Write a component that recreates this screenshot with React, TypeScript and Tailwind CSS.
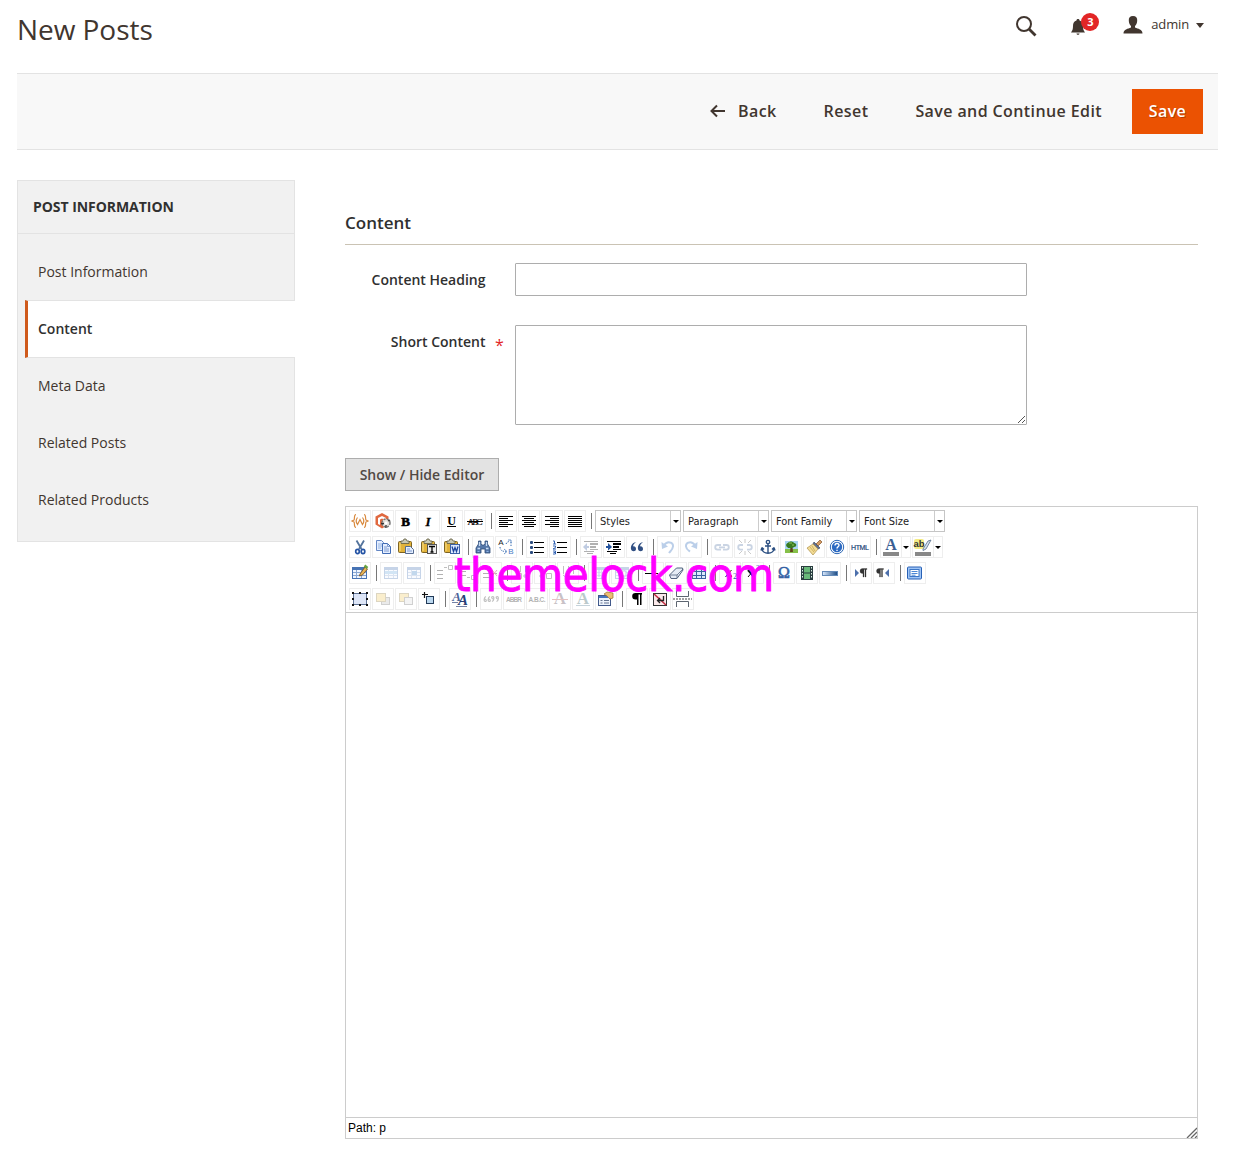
import React from "react";

const Svg = ({ children, faded = false }: { children: React.ReactNode; faded?: boolean }) => (
  <svg viewBox="0 0 20 20" fill="none" className={faded ? "block size-5 opacity-30" : "block size-5"}>
    {children}
  </svg>
);

const glyph = (x: number, y: number, size: number, text: string, extra: React.SVGProps<SVGTextElement> = {}) => (
  <text x={x} y={y} fontSize={size} textAnchor="middle" fill="#000" fontFamily="Liberation Serif, serif" {...extra}>
    {text}
  </text>
);

const lines = (rows: [number, number, number][], color = "#000") => (
  <g fill={color} shapeRendering="crispEdges">
    {rows.map(([x, y, w], i) => (
      <rect key={i} x={x} y={y} width={w} height={1} />
    ))}
  </g>
);

const Clipboard = ({ children }: { children: React.ReactNode }) => (
  <Svg>
    <rect x="2.5" y="4.5" width="13" height="11" rx="1" fill="#e2b33a" stroke="#7d6323" />
    <path d="M4 14V6h2" stroke="#fbe08a" />
    <path d="M5 6.500V4h2l1-2h2l1 2h2v2.500z" fill="#c9c9b4" stroke="#5f5a3e" strokeWidth=".8" />
    {children}
  </Svg>
);

const Grid = ({ x = 3, y = 4, w = 14, h = 12, stroke = "#4773b4" }) => (
  <g shapeRendering="crispEdges">
    <rect x={x + 0.5} y={y + 0.5} width={w - 1} height={h - 1} fill="#eef5ff" stroke={stroke} />
    <rect x={x} y={y} width={w} height="3" fill={stroke} />
    <path d={`M${x} ${y + 5.5}h${w}M${x} ${y + 8.5}h${w}M${x + 4.5} ${y}v${h}M${x + 9.5} ${y}v${h}`} stroke={stroke} opacity=".6" />
  </g>
);

const Plus = ({ x, y }: { x: number; y: number }) => (
  <path d={`M${x - 2} ${y}h4M${x} ${y - 2}v4`} stroke="#333" />
);

const icons: Record<string, React.ReactNode> = {
  variable: (
    <Svg>
      <path d="M6 3.500C3.500 3.500 5 8 4 9L2 10l2 1c1 1-.5 5.500 2 5.500M14 3.500c2.500 0 1 4.500 2 5.500l2 1-2 1c-1 1 .5 5.500-2 5.500" stroke="#d98a3f" strokeWidth="1.200" />
      <path d="M7.500 6.500c-1.500 2-1.500 5 0 7l2.500-5 2.500 5c1.500-2 1.500-5 0-7" stroke="#d98a3f" strokeWidth="1.200" />
    </Svg>
  ),
  widget: (
    <Svg>
      <path d="M9 2l6.500 3.500v8L9 17.500l-6.500-4v-8z" fill="#e0683f" />
      <path d="M5 7l4-2 4 2v6l-2 1V8.500L9 7.500l-2 1V14l-2-1z" fill="#fff" />
      <circle cx="13" cy="12" r="4" fill="#e5e0da" stroke="#777" strokeWidth="1.500" strokeDasharray="2 1.200" />
      <circle cx="13" cy="12" r="1.500" fill="#fff" />
      <path d="M8 12.500h3M13 14v3M15 10l2-1" stroke="#333" strokeWidth="1.300" />
    </Svg>
  ),
  bold: <Svg>{glyph(9.5, 14.5, 13, "B", { fontWeight: 700, stroke: "#000", strokeWidth: 0.6 })}</Svg>,
  italic: <Svg>{glyph(9, 14.5, 13, "I", { fontWeight: 700, fontStyle: "italic", stroke: "#000", strokeWidth: 0.3 })}</Svg>,
  underline: (
    <Svg>
      {glyph(9.5, 13.5, 12, "U", { fontWeight: 700 })}
      {lines([[5, 15, 9]])}
    </Svg>
  ),
  strike: (
    <Svg>
      {glyph(10, 13.5, 9, "ABC", { textLength: 15, stroke: "#000", strokeWidth: 0.2 })}
      {lines([[2, 10, 16]])}
    </Svg>
  ),
  alignLeft: <Svg>{lines([[3, 5, 14], [3, 7, 9], [3, 9, 14], [3, 11, 9], [3, 13, 14], [3, 15, 9]])}</Svg>,
  alignCenter: <Svg>{lines([[3, 5, 14], [5, 7, 10], [3, 9, 14], [5, 11, 10], [3, 13, 14], [5, 15, 10]])}</Svg>,
  alignRight: <Svg>{lines([[3, 5, 14], [8, 7, 9], [3, 9, 14], [8, 11, 9], [3, 13, 14], [8, 15, 9]])}</Svg>,
  alignFull: <Svg>{lines([[3, 5, 14], [3, 7, 14], [3, 9, 14], [3, 11, 14], [3, 13, 14], [3, 15, 14]])}</Svg>,
  cut: (
    <Svg>
      <path d="M6.500 3.500l5 8.500M14 3.500l-5 8.500" stroke="#53739c" strokeWidth="1.800" />
      <ellipse cx="7.500" cy="14.500" rx="1.800" ry="2.200" stroke="#2554a5" strokeWidth="1.700" />
      <ellipse cx="13" cy="14.500" rx="1.800" ry="2.200" stroke="#2554a5" strokeWidth="1.700" />
    </Svg>
  ),
  copy: (
    <Svg>
      <path d="M3.500 3.500h5l2 2v8h-7z" fill="#e5efff" stroke="#6487c4" />
      <path d="M5 7h4M5 9h4M5 11h3" stroke="#86a7da" strokeWidth=".8" />
      <path d="M9.500 6.500h5l3 3v7h-8z" fill="#e5efff" stroke="#416cb5" />
      <path d="M14.500 6.500v3h3M11 10h3M11 12h5M11 14h5" stroke="#6487c4" strokeWidth=".8" />
    </Svg>
  ),
  paste: (
    <Clipboard>
      <path d="M9.500 9.500h5l3 3v4h-8z" fill="#e5efff" stroke="#556b90" />
      <path d="M11 12h3M11 14h5" stroke="#6487c4" strokeWidth=".8" />
    </Clipboard>
  ),
  pasteText: (
    <Clipboard>
      <rect x="8.500" y="7.500" width="9" height="9" fill="#eee" stroke="#555" />
      <path d="M10 9.500h6M13 9.500V15M11.500 15h3" stroke="#000" strokeWidth="1.300" />
    </Clipboard>
  ),
  pasteWord: (
    <Clipboard>
      <rect x="8.500" y="7.500" width="9" height="9" fill="#dce9ff" stroke="#3d62a8" />
      <path d="M10 9.500l1.500 5 1.500-4 1.500 4 1.500-5" stroke="#1d459c" strokeWidth="1.300" />
    </Clipboard>
  ),
  search: (
    <Svg>
      <path d="M5.500 4h2.500v3l1 1h2l1-1V4h2.500v3l2.500 4v5h-5v-4H8v4H3v-5l2.500-4z" fill="#5577a8" stroke="#2f4c79" strokeWidth=".8" />
      <path d="M4.500 11.500h2.500M13 11.500h2.500M6.500 5v4M13.500 5v4" stroke="#c8dcf5" strokeWidth="1.300" />
      <path d="M4.500 14.500h2M13.500 14.500h2" stroke="#8fb3e4" />
    </Svg>
  ),
  replace: (
    <Svg>
      {glyph(5, 8, 8, "A", { fontFamily: "Liberation Sans, sans-serif", fill: "#222" })}
      {glyph(15, 17, 8, "B", { fontFamily: "Liberation Sans, sans-serif", fill: "#4a7dc4" })}
      <path d="M10 7c1-2 2-2.500 4-2.500M15 9V5M4 10c0 3 2 4.500 6 4.500" stroke="#3268ae" strokeDasharray="1.300 1.300" />
      <path d="M12 3h3v3M8 12l3 2.500L8 17" stroke="#4b7dbf" strokeWidth=".8" />
    </Svg>
  ),
  bullets: (
    <Svg>
      {lines([[7, 5, 10], [7, 10, 10], [7, 15, 10]])}
      <g fill="#2b4b7e"><rect x="3" y="4" width="3" height="3" rx="1" /><rect x="3" y="9" width="3" height="3" rx="1" /><rect x="3" y="14" width="3" height="3" rx="1" /></g>
    </Svg>
  ),
  numbers: (
    <Svg>
      {lines([[7, 5, 10], [7, 10, 10], [7, 15, 10]])}
      <path d="M3 4h1.500v3M3 7h3M3 9h2.500v1.500L3 12h3M3 14h2.500v3H3M3.500 15.500h2" stroke="#3263b4" strokeWidth="1" />
    </Svg>
  ),
  outdent: (
    <Svg faded>
      {lines([[3, 4, 14], [9, 6, 8], [9, 7, 8], [9, 9, 6], [9, 10, 6], [9, 12, 8], [3, 14, 10], [6, 16, 6]])}
      <path d="M6 6L2 10l4 4v-3h2V9H6z" fill="#315aa0" />
    </Svg>
  ),
  indent: (
    <Svg>
      {lines([[3, 4, 14], [9, 6, 8], [9, 7, 8], [9, 9, 6], [9, 10, 6], [9, 12, 8], [3, 14, 10], [6, 16, 6]])}
      <path d="M2 9h2V6l4 4-4 3.500V11H2z" fill="#23539e" />
    </Svg>
  ),
  quote: (
    <Svg>
      <path d="M9 5C5 6 3.500 9 4 12c.5 3 5 3 5 0 0-2-1.500-3-3-2.500C6 8 7 6.500 9 5zM16 5c-4 1-5.500 4-5 7 .5 3 5 3 5 0 0-2-1.500-3-3-2.500C13 8 14 6.500 16 5z" fill="#304f83" />
    </Svg>
  ),
  undo: (
    <Svg faded>
      <path d="M3.500 5l.5 7 6-2.500z" fill="#2362b7" />
      <path d="M6 8.500c3-5 9.500-3.500 9 1-.3 3-2.500 4.500-4 6.500" stroke="#2362b7" strokeWidth="2" />
    </Svg>
  ),
  redo: (
    <Svg faded>
      <path d="M16.500 5l-.5 7-6-2.500z" fill="#2362b7" />
      <path d="M14 8.500c-3-5-9.500-3.500-9 1 .3 3 2.500 4 4 5" stroke="#2362b7" strokeWidth="2" />
    </Svg>
  ),
  link: (
    <Svg faded>
      <path d="M9 8H5.500a2.300 2.300 0 000 4.600H9M11 8h3.500a2.300 2.300 0 010 4.600H11M7 10.300h6" stroke="#5275a5" strokeWidth="1.800" />
    </Svg>
  ),
  unlink: (
    <Svg faded>
      <path d="M8 8H5.500a2.300 2.300 0 000 4.600H8M12 8h2.500a2.300 2.300 0 010 4.600H12" stroke="#5275a5" strokeWidth="1.800" />
      <path d="M10 6V2M7 6L4 3M13 6l3-3M10 14v4M7 14l-3 3M13 14l3 3" stroke="#555" />
    </Svg>
  ),
  anchor: (
    <Svg>
      <circle cx="10" cy="5" r="1.700" stroke="#2b4f82" strokeWidth="1.300" />
      <path d="M10 7v9M7 9h6M4 11c0 7 12 7 12 0M4 10.500l-1 3M4 10.500l2 2M16 10.500l1 3M16 10.500l-2 2" stroke="#2b4f82" strokeWidth="1.400" />
    </Svg>
  ),
  image: (
    <Svg>
      <rect x="4" y="4" width="13" height="12" fill="#a8d4ef" />
      <path d="M4 12h13v4H4z" fill="#86c04a" />
      <path d="M9.500 10h2l.5 5H9z" fill="#60411c" />
      <path d="M6 10c-2-2 0-4 1-4 1-2 5-2 6 0 3 0 3 4 0 4-1 1-5 2-7 0z" fill="#387b20" />
      <path d="M8 6h3M11 8h2" stroke="#91c65a" />
    </Svg>
  ),
  cleanup: (
    <Svg>
      <path d="M12 7l4-4 2 2-4 4z" fill="#d59b61" stroke="#815129" strokeWidth=".7" />
      <path d="M10 5l6 6-2 1-5-5z" fill="#63718c" stroke="#414c60" strokeWidth=".7" />
      <path d="M9 7l5 5-5 6-6-7z" fill="#f3dc96" stroke="#ae914a" strokeWidth=".7" />
      <path d="M8 9l3 5M6 10l4 5" stroke="#c6a855" strokeWidth=".8" />
    </Svg>
  ),
  help: (
    <Svg>
      <circle cx="10" cy="10" r="6.700" fill="#fff" stroke="#2b66b5" />
      <circle cx="10" cy="10" r="5.200" fill="#2c6ac2" />
      <path d="M8 8.500c0-3 4.300-2.500 4 0-.2 1.200-2 1.500-2 3M10 12.800v1.300" stroke="#fff" strokeWidth="1.400" />
    </Svg>
  ),
  html: <Svg>{glyph(10, 12.5, 7, "HTML", { fontFamily: "Liberation Sans, sans-serif", fill: "#254879", textLength: 18, stroke: "#254879", strokeWidth: 0.2 })}</Svg>,
  forecolor: (
    <Svg>
      {glyph(10, 13, 16, "A", { fontWeight: 700, fill: "#3a5e93" })}
      <rect x="2" y="15" width="16" height="4" fill="#888" />
    </Svg>
  ),
  backcolor: (
    <Svg>
      <rect x="1" y="2" width="10" height="10" rx="2" fill="#f4eb83" />
      {glyph(6, 10, 9.5, "ab", { fontFamily: "Liberation Sans, sans-serif", fontWeight: 700, fill: "#333" })}
      <path d="M10 12l5-8 3-1-5 9-3 1.500z" fill="#d4dfed" stroke="#57708d" strokeWidth=".8" />
      <rect x="2" y="15" width="16" height="4" fill="#888" />
    </Svg>
  ),
  table: (
    <Svg>
      <Grid x={2} y={4} w={15} h={12} />
      <path d="M10 11l5-7 2.500 2-5 6-3 1z" fill="#e8b455" stroke="#75552d" strokeWidth=".9" />
      <path d="M14.500 2.500l3 2.500" stroke="#68a342" strokeWidth="2.400" />
    </Svg>
  ),
  rowProps: <Svg faded><Grid /><rect x="4" y="8" width="12" height="3" fill="#6eabdf" /></Svg>,
  cellProps: <Svg faded><Grid /><rect x="8" y="8" width="5" height="4" fill="#397fc7" /></Svg>,
  rowBefore: <Svg faded>{lines([[2, 7, 6], [2, 11, 6], [2, 15, 6]])}<path d="M9 4.500h3M13.500 2.500h4v4h-4z" stroke="#333" /></Svg>,
  rowAfter: <Svg faded>{lines([[2, 4, 6], [2, 8, 6], [2, 12, 6]])}<path d="M9 14.500h3M13.500 12.500h4v4h-4z" stroke="#333" /></Svg>,
  deleteRow: <Svg faded>{lines([[2, 5, 7], [2, 10, 14], [2, 14, 7]])}<path d="M11 7l5 6M16 7l-5 6" stroke="#a22" /></Svg>,
  colBefore: <Svg faded><path d="M8.500 3v6M13.500 3v6M4.500 10.500h5v5h-5z" stroke="#333" /><Plus x={13} y={13} /></Svg>,
  colAfter: <Svg faded><path d="M6.500 3v6M11.500 3v6M11.500 10.500h5v5h-5z" stroke="#333" /><Plus x={6} y={13} /></Svg>,
  deleteCol: <Svg faded><path d="M5.500 3v8M10.500 3v13M15.500 3v8M5 12l5 4" stroke="#333" /></Svg>,
  splitCells: <Svg faded><Grid /><path d="M10 5v9" stroke="#216ab4" /></Svg>,
  mergeCells: <Svg faded><Grid /><rect x="7" y="8" width="7" height="5" fill="#fff" stroke="#216ab4" /></Svg>,
  hr: <Svg>{lines([[2, 10, 13]])}</Svg>,
  eraser: (
    <Svg>
      <path d="M3.500 12l7-7h6l.5 2-6 8.500H5z" fill="#e5ecf5" stroke="#53647f" />
      <path d="M4 12h7l6-6M11 12v3" stroke="#53647f" strokeWidth=".8" />
    </Svg>
  ),
  visual: (
    <Svg>
      <rect x="3" y="5" width="14" height="11" fill="#dbe9fb" />
      <path d="M3 5.500h14M3 8.500h14M3 12.500h14M3 15.500h14M3.500 5v11M7.500 5v11M12.500 5v11M16.500 5v11" stroke="#3a639f" shapeRendering="crispEdges" />
    </Svg>
  ),
  sub: <Svg><path d="M5.500 7l6 7" stroke="#111" strokeWidth="2" /><path d="M11.500 7l-6 7" stroke="#111" />{glyph(15, 16, 8, "2", { fill: "#285ca8" })}</Svg>,
  sup: <Svg><path d="M5 7l6 7" stroke="#111" strokeWidth="2" /><path d="M11 7l-6 7" stroke="#111" />{glyph(15, 8, 8, "2", { fill: "#285ca8" })}</Svg>,
  charmap: <Svg>{glyph(10, 15, 16, "Ω", { fill: "#3561a4", stroke: "#3561a4", strokeWidth: 0.6 })}</Svg>,
  media: (
    <Svg>
      <rect x="4" y="3" width="12" height="14" fill="#293d3f" />
      <rect x="7" y="4" width="6" height="5.500" fill="#68b879" />
      <rect x="7" y="10.500" width="6" height="5.500" fill="#68b879" />
      <path d="M5.500 4v12M14.500 4v12" stroke="#d8eee0" strokeDasharray="1.500 1.500" />
    </Svg>
  ),
  advhr: (
    <Svg>
      <defs><linearGradient id="hr-fill"><stop stopColor="#dbeafe" /><stop offset="1" stopColor="#194982" /></linearGradient></defs>
      <rect x="2.500" y="8.500" width="15" height="4" fill="url(#hr-fill)" stroke="#6289b8" />
    </Svg>
  ),
  ltr: <Svg><path d="M4 6l4 4-4 4z" fill="#4d70ac" /><path d="M16 5.500h-4.500a2.500 2.500 0 000 5H12V14h1V6.500h1V14h1V6.500h1z" fill="#333" stroke="#333" strokeWidth=".3" /></Svg>,
  rtl: <Svg><path d="M15 6l-4 4 4 4z" fill="#4d70ac" /><path d="M9.500 5.500H5a2.500 2.500 0 000 5h.5V14h1V6.500h1V14h1V6.500h1z" fill="#333" stroke="#333" strokeWidth=".3" /></Svg>,
  fullscreen: (
    <Svg>
      <rect x="2.500" y="4" width="14" height="12" rx="1" fill="#9ec4f6" stroke="#2861b5" />
      <rect x="5" y="6.500" width="9" height="7" fill="#fff" stroke="#3c76c6" />
      <path d="M6.500 8.500h6M6.500 10.500h6M6.500 12.200h4" stroke="#397bd1" strokeWidth=".9" />
    </Svg>
  ),
  layer: (
    <Svg>
      <rect x="3.500" y="4.500" width="13" height="11" fill="#dde5f6" stroke="#5b6f92" />
      <g fill="#111" shapeRendering="crispEdges">
        {[[2, 3], [9, 3], [16, 3], [2, 9], [16, 9], [2, 15], [9, 15], [16, 15]].map(([x, y]) => (
          <rect key={`${x}-${y}`} x={x} y={y} width="2" height="2" />
        ))}
      </g>
    </Svg>
  ),
  forward: <Svg faded><rect x="8.500" y="8.500" width="8" height="7" fill="#bbb" stroke="#666" /><rect x="3.500" y="4.500" width="9" height="8" fill="#efc85c" stroke="#8f7836" /></Svg>,
  backward: <Svg faded><rect x="3.500" y="4.500" width="9" height="8" fill="#efc85c" stroke="#8f7836" /><rect x="8.500" y="8.500" width="8" height="7" fill="#ddd" stroke="#666" /></Svg>,
  absolute: <Svg><path d="M5.500 3v6M3 5.500h6" stroke="#111" strokeWidth="1.200" /><rect x="7.500" y="7.500" width="7" height="7" fill="#bcd8ef" stroke="#223a58" /></Svg>,
  style: (
    <Svg>
      {glyph(6.5, 12, 13, "A", { fontStyle: "italic", fontWeight: 700, fill: "#4a6297" })}
      {glyph(13, 16, 15, "A", { fontStyle: "italic", fontWeight: 700, fill: "#293f78" })}
      <path d="M2 13.500h6M6 17.500h11" stroke="#7381a5" />
    </Svg>
  ),
  cite: (
    <Svg faded>
      <path d="M5 7.500c-2 .5-2.500 5-.8 5s1.300-2.500-.5-2.500M9 7.500c-2 .5-2.500 5-.8 5S9.500 10 7.700 10M11 12.500c2-.5 2.500-5 .8-5s-1.300 2.500.5 2.500M15.500 12.500c2-.5 2.500-5 .8-5S15 10 16.800 10" stroke="#333" strokeWidth="1.200" />
    </Svg>
  ),
  abbr: <Svg faded>{glyph(10, 12.5, 6.5, "ABBR", { fontFamily: "Liberation Sans, sans-serif", textLength: 16, fontWeight: 700 })}</Svg>,
  acronym: <Svg faded>{glyph(10, 12.5, 6.5, "A.B.C.", { fontFamily: "Liberation Sans, sans-serif", textLength: 17, fontWeight: 700 })}</Svg>,
  del: <Svg faded>{glyph(10, 15, 17, "A", { fontWeight: 700, fill: "#4d3646" })}<path d="M2 10.500h16" stroke="#a33" /></Svg>,
  ins: <Svg faded>{glyph(10, 15, 17, "A", { fontWeight: 700, fill: "#225157" })}<path d="M3 16.500h14" stroke="#427187" /></Svg>,
  attribs: (
    <Svg>
      <rect x="2.500" y="6.500" width="12" height="10" fill="#edf3fb" stroke="#41598a" />
      <path d="M3 8h9" stroke="#4776be" strokeWidth="2" />
      <path d="M4.500 11.500h2M8 11.500h5M4.500 14h2M8 14h5" stroke="#647390" />
      <path d="M8 5l3-2 6 1v5l-3 1-3-3z" fill="#eabf74" stroke="#9c6d2c" strokeWidth=".7" />
    </Svg>
  ),
  chars: <Svg><path d="M15 4H8.500a3.300 3.300 0 000 6.600H10V16h1.500V5.500H13V16h1.500V5.500H15z" fill="#000" /></Svg>,
  nbsp: (
    <Svg>
      <rect x="3.500" y="4.500" width="13" height="12" fill="#fbe9ea" stroke="#333" />
      <path d="M4 5l12 11" stroke="#c12a3d" strokeWidth="1.500" />
      <path d="M13.500 7v4.500H8M10 9l-2.500 2.500L10 14" stroke="#222" strokeWidth="1.300" />
    </Svg>
  ),
  pagebreak: (
    <Svg>
      <path d="M3.500 2v5.500h12V2M3.500 18v-5.500h12V18" fill="#fff" stroke="#5d6570" />
      <path d="M0 10h19" stroke="#444" strokeDasharray="2 1" />
    </Svg>
  ),
};

const rows: string[][] = [
  ["variable", "widget", "bold", "italic", "underline", "strike", "|", "alignLeft", "alignCenter", "alignRight", "alignFull", "|", "select:Styles", "select:Paragraph", "select:Font Family", "select:Font Size"],
  ["cut", "copy", "paste", "pasteText", "pasteWord", "|", "search", "replace", "|", "bullets", "numbers", "|", "outdent", "indent", "quote", "|", "undo", "redo", "|", "link", "unlink", "anchor", "image", "cleanup", "help", "html", "|", "split:forecolor", "split:backcolor"],
  ["table", "|", "rowProps", "cellProps", "|", "rowBefore", "rowAfter", "deleteRow", "|", "colBefore", "colAfter", "deleteCol", "|", "splitCells", "mergeCells", "|", "hr", "eraser", "visual", "|", "sub", "sup", "|", "charmap", "media", "advhr", "|", "ltr", "rtl", "|", "fullscreen"],
  ["layer", "forward", "backward", "absolute", "|", "style", "|", "cite", "abbr", "acronym", "del", "ins", "attribs", "|", "chars", "nbsp", "pagebreak"],
];

const Caret = () => <span className="block border-x-[3px] border-t-[3px] border-x-transparent border-t-black" />;

function Tool({ name }: { name: string }) {
  if (name === "|") {
    return (
      <div className="flex h-[22px] w-2 items-center justify-center">
        <div className="h-4 w-px bg-[#777]" />
      </div>
    );
  }
  if (name.startsWith("select:")) {
    return (
      <div className="mr-0.5 flex h-[22px] w-[86px] border border-[#c5c5c5] bg-white font-['DejaVu_Sans_Condensed','DejaVu_Sans',sans-serif] text-[11px] leading-[21px] text-[#222]">
        <span className="flex-1 pl-1 whitespace-nowrap [font-stretch:condensed]">{name.slice(7)}</span>
        <span className="flex w-2.5 items-center justify-center border-l border-[#ccc]"><Caret /></span>
      </div>
    );
  }
  if (name.startsWith("split:")) {
    return (
      <div className="mr-px flex h-[22px] w-[31px] border border-[#eee]">
        <div className="w-5 shrink-0">{icons[name.slice(6)]}</div>
        <div className="flex flex-1 items-center justify-center border-l border-[#eee]"><Caret /></div>
      </div>
    );
  }
  return <div className="mr-px size-[22px] border border-[#eee]">{icons[name]}</div>;
}

function Sidebar() {
  const items = ["Post Information", "Content", "Meta Data", "Related Posts", "Related Products"];
  return (
    <aside className="h-[362px] w-[278px] shrink-0 border border-[#e3e3e3] bg-[#f1f1f1]">
      <h2 className="flex h-[53px] items-center border-b border-[#e3e3e3] pl-[15px] text-sm font-bold tracking-[-0.05px] text-[#303030]">
        <span className="whitespace-nowrap">POST INFORMATION</span>
      </h2>
      <nav className="pt-[9px]">
        {items.map((item) =>
          item === "Content" ? (
            <a key={item} className="-mr-px -mb-px ml-[7px] flex h-[58px] items-center border-y border-l-[3px] border-y-[#e3e3e3] border-l-[#cf5a1c] bg-white pl-2.5 text-sm font-semibold text-[#303030]">
              {item}
            </a>
          ) : (
            <a key={item} className="flex h-[57px] items-center pl-5 text-sm text-[#41362f]">
              {item}
            </a>
          ),
        )}
      </nav>
    </aside>
  );
}

function Editor() {
  return (
    <div className="relative mt-[15px] h-[633px] w-[853px] border border-[#ccc] bg-white">
      <div className="flex h-[106px] flex-col gap-1 border-b border-[#ccc] pt-[3px] pl-[3px]">
        {rows.map((row, i) => (
          <div key={i} className="flex h-[22px]">
            {row.map((name, j) => <Tool key={j} name={name} />)}
          </div>
        ))}
      </div>
      <div className="h-[504px]" />
      <div className="flex h-[21px] items-center justify-between border-t border-[#ccc] pl-0.5 font-['Liberation_Sans',sans-serif] text-[12px] text-black">
        <span>Path: p</span>
        <svg viewBox="0 0 12 12" className="size-3 self-end" stroke="#666" strokeWidth="1.300"><path d="M2 12L12 2M6 12l6-6M10 12l2-2" /></svg>
      </div>
      <div className="absolute top-[36px] left-[108px] font-['DejaVu_Sans_Condensed','DejaVu_Sans',sans-serif] text-[47px] leading-[64px] tracking-[-0.45px] whitespace-nowrap text-[#ff00ff] [font-stretch:condensed] [-webkit-text-stroke:0.9px_#ff00ff]">
        themelock.com
      </div>
    </div>
  );
}

export default function App() {
  return (
    <div className="h-[1151px] w-[1234px] overflow-hidden bg-white pl-[17px] font-['Open_Sans',sans-serif] text-[#41362f]">
      <header className="flex h-[73px] w-[1201px] justify-between">
        <h1 className="pt-[9px] text-[28px] leading-10 font-normal tracking-[-0.05px] text-[#41362f]">New Posts</h1>
        <div className="flex h-[50px] items-center pr-3.5">
          <svg viewBox="0 0 22 22" className="mt-0.5 mr-[33px] size-[22px]" fill="none" stroke="#41362f"><circle cx="9" cy="9" r="7" strokeWidth="2" /><path d="M14 14l6.500 6.500" strokeWidth="2.800" /></svg>
          <div className="relative mr-[37px] flex h-[50px] w-4 items-center">
            <svg viewBox="0 0 16 18" className="mt-[3px] h-[18px] w-4" fill="#41362f"><path d="M8 1c1 0 1.500.6 1.500 1.400C12 3 13 5 13 8c0 3 .5 4.500 2 6.500H1C2.500 12.500 3 11 3 8c0-3 1-5 3.500-5.600C6.500 1.600 7 1 8 1zM6.500 15.500h3c0 1.800-3 1.800-3 0z" /></svg>
            <span className="absolute top-[13px] left-[11px] flex size-[18px] items-center justify-center rounded-full bg-[#e22626] text-[11px] font-bold text-white">3</span>
          </div>
          <svg viewBox="0 0 20 18" className="mr-2 h-[18px] w-5" fill="#41362f"><path d="M10 0c3 0 4.500 2 4.200 4.800-.2 2.500-.8 4-2.200 5.200v1.500c3 1.500 7.500 1.500 7.500 6H.5c0-4.500 4.500-4.500 7.500-6V10C6.600 8.800 6 7.300 5.800 4.800 5.500 2 7 0 10 0z" /></svg>
          <span className="text-[13px] tracking-[-0.15px]">admin</span>
          <span className="ml-[7px] border-x-[4px] border-t-[5px] border-x-transparent border-t-[#41362f]" />
        </div>
      </header>
      <div className="flex h-[77px] w-[1201px] items-center justify-end border-y border-[#e3e3e3] bg-[#f8f8f8] pr-[15px] text-base font-semibold tracking-[0.4px] whitespace-nowrap">
        <div className="mr-[47px] flex items-center pb-0.5">
          <svg viewBox="0 0 15 14" className="mr-[13px] h-3.5 w-[15px]" fill="none" stroke="#41362f" strokeWidth="2"><path d="M7 1.500L1.500 7 7 12.500M1.500 7H15" /></svg>
          <span>Back</span>
        </div>
        <span className="mr-[47px] pb-0.5">Reset</span>
        <span className="mr-[30px] pb-0.5">Save and Continue Edit</span>
        <button className="h-[45px] w-[71px] bg-[#eb5202] pb-0.5 font-semibold tracking-[0.4px] text-white [text-shadow:1px_1px_0_rgba(0,0,0,0.25)]">Save</button>
      </div>
      <div className="flex pt-[30px]">
        <Sidebar />
        <main className="ml-[50px] w-[853px]">
          <h2 className="flex h-[65px] items-end border-b border-[#cac3b4] pb-[9px] text-[17px] leading-6 font-semibold text-[#303030]">Content</h2>
          <div className="mt-[18px] flex h-[33px] text-sm font-semibold text-[#303030]">
            <label className="w-[140.5px] pt-[7px] text-right leading-5">Content Heading</label>
            <div className="ml-[29.5px] w-[512px] rounded-[1px] border border-[#adadad]" />
          </div>
          <div className="mt-[29px] flex h-[100px] text-sm font-semibold text-[#303030]">
            <label className="w-[140.5px] pt-[7px] text-right leading-5">Short Content</label>
            <span className="w-[29.5px] pt-[10px] pl-[9.500px] text-base leading-5 font-normal text-[#e22626]">*</span>
            <div className="flex w-[512px] items-end justify-end rounded-[1px] border border-[#adadad]">
              <svg viewBox="0 0 9 9" className="size-[9px]" stroke="#555"><path d="M1 8L8 1M5 8l3-3" /></svg>
            </div>
          </div>
          <button className="mt-[33px] block h-[33px] w-[154px] border border-[#adadad] bg-[#e3e3e3] text-sm font-semibold whitespace-nowrap text-[#514943]">Show / Hide Editor</button>
          <Editor />
        </main>
      </div>
    </div>
  );
}
